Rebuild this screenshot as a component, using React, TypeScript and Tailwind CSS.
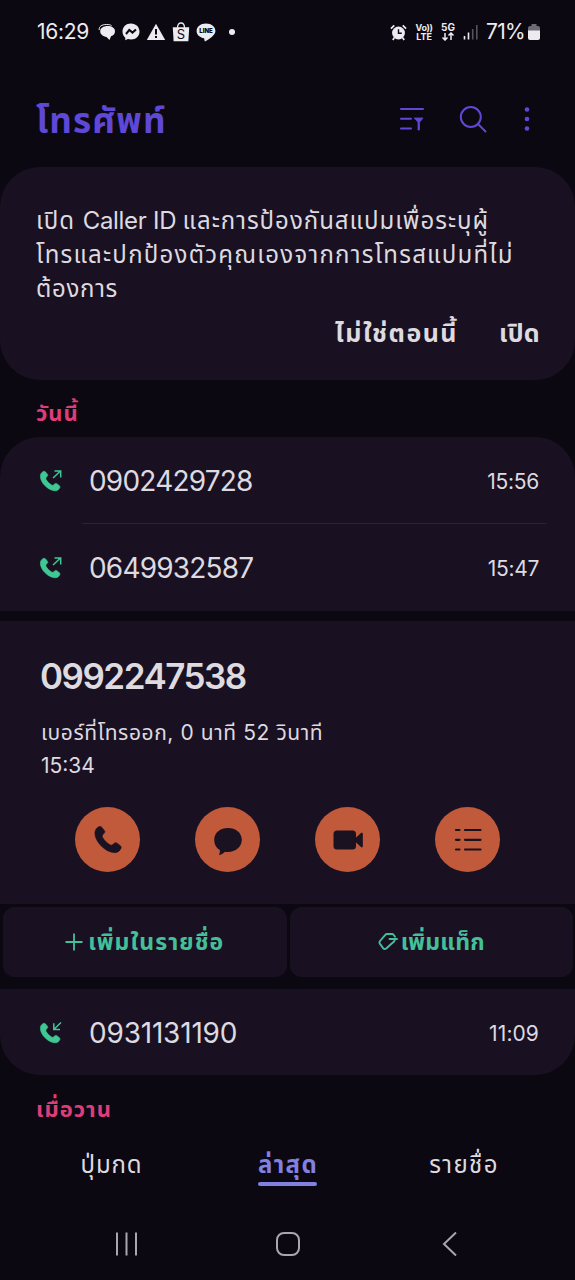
import React from 'react'

type CallKind = 'outgoing' | 'incoming'

const HANDSET =
  'M3.800.6C5 0 6.200.2 7 1.200L9.300 4.100C10 5 10 5.800 9.300 6.600L8 8.100C7.200 9.100 7.100 10 7.700 11.100C9.400 14.100 11.900 16.500 14.800 18.200C15.900 18.800 16.800 18.700 17.700 17.900L19.200 16.700C20 16 20.800 16 21.700 16.600L24.800 18.900C25.900 19.700 26.200 20.900 25.500 22.100C24.100 24.700 21.800 26.100 18.900 25.900C14.500 25.600 9.900 23 6.300 19.300C2.600 15.500.3 11.200.1 7.300C0 4.300 1.300 1.900 3.800.6z'

function CallIcon({ kind }: { kind: CallKind }) {
  return (
    <svg viewBox="0 0 24 24" className="h-6 w-6 shrink-0" fill="none">
      <path d={HANDSET} transform="translate(1.300 2.100) scale(.76)" fill="#3fc794" stroke="#3fc794" strokeWidth=".8" />
      {kind === 'outgoing' ? (
        <path d="M14 9 21.500 2M15.500 2h6.200v6.500" stroke="#3fc794" strokeWidth="1.500" />
      ) : (
        <path d="M22 1.500 15 8.300M14.800 2.300v6.300h6.200" stroke="#3fc794" strokeWidth="1.500" />
      )}
    </svg>
  )
}

function StatusBar() {
  return (
    <div className="flex h-16 items-center justify-between pr-[35px] pl-[37px] text-[#ececf0]">
      <div className="flex items-center">
        <span className="w-[54px] text-[21px] tracking-[-0.3px]">16:29</span>
        <svg viewBox="0 0 18 18" className="ml-[7px] h-[18px] w-[18px]" fill="none">
          <path d="M1.200 7C.8 3.500 3.500 1.500 8.500 1.500c2.500 0 4 .3 5 1" stroke="#ececf0" strokeWidth="1" />
          <path d="M9.500 3C14 3 17 5 17 8.300c0 2.500-1.500 4.200-4 5l-1.500 3.700-3-3C5 13.500 2.200 11.500 2.200 8.300S5.500 3 9.500 3z" fill="#ececf0" />
        </svg>
        <svg viewBox="0 0 18 18" className="ml-[6px] h-[18px] w-[18px]">
          <path d="M9 .5C4 .5.5 4 .5 8.600c0 2.600 1 4.600 2.800 6.100v2.600l2.600-1.200c1 .3 2 .5 3.100.5 5 0 8.500-3.500 8.500-8S14 .5 9 .5z" fill="#ececf0" />
          <path d="m4 11 3.300-4 3.200 2.600L14 6.500" stroke="#0c0811" strokeWidth="2" fill="none" />
        </svg>
        <svg viewBox="0 0 20 18" className="ml-[6px] h-[18px] w-5">
          <path d="M10 .8 19.200 17H.8z" fill="#ececf0" />
          <path d="M10 6v5.500M10 13v2" stroke="#0c0811" strokeWidth="2" />
        </svg>
        <svg viewBox="0 0 18 20" className="ml-[6px] h-5 w-[18px]">
          <path d="M5.500 6C5.500 2.500 7 1 9 1s3.500 1.500 3.500 5" stroke="#ececf0" strokeWidth="1.300" fill="none" />
          <path d="M.8 5.300h16.400l-.8 13.900H1.600z" fill="#ececf0" />
          <text x="9" y="17" textAnchor="middle" fontSize="13" fill="#0c0811" fontFamily="Inter">S</text>
        </svg>
        <svg viewBox="0 0 20 19" className="ml-[6px] h-[19px] w-5">
          <path d="M10 .5C4.500.5.600 3.800.6 8c0 3.700 3 6.500 7.500 7.300L8.800 18.500C12.500 16.500 19.400 12.500 19.400 8 19.400 3.800 15.500.5 10 .5z" fill="#ececf0" />
          <text x="10" y="10.400" textAnchor="middle" fontSize="6" fontWeight="900" fill="#0c0811" fontFamily="Inter">LINE</text>
        </svg>
        <span className="ml-[13px] h-[6px] w-[6px] rounded-full bg-[#ececf0]" />
      </div>

      <div className="flex items-center">
        <svg viewBox="0 0 18 18" className="h-[17px] w-[17px]">
          <circle cx="9" cy="9.500" r="6.800" fill="#ececf0" />
          <path d="M1 5 4.500 1.500M17 5l-3.500-3.500M4.500 14.500 3 17M13.500 14.500 15 17" stroke="#ececf0" strokeWidth="1.800" />
          <path d="M9 5.500v4.300h3.500" stroke="#0c0811" strokeWidth="1.500" fill="none" />
        </svg>
        <div className="ml-2 flex w-[18px] flex-col items-center text-[9px] leading-[9px] font-bold whitespace-nowrap">
          <span className="tracking-[-0.4px]">Vo))</span>
          <span>LTE</span>
        </div>
        <div className="ml-2 flex w-[14px] flex-col items-center">
          <span className="text-[10px] leading-[9px] font-bold">5G</span>
          <svg viewBox="0 0 14 9" className="h-[9px] w-[14px]" fill="none" stroke="#ececf0" strokeWidth="1.500">
            <path d="M4 1v7M1.500 5.500 4 8l2.500-2.500M10 8V1M7.500 3.500 10 1l2.500 2.500" />
          </svg>
        </div>
        <svg viewBox="0 0 16 16" className="ml-2 h-4 w-4">
          <path d="M1.500 12v3.500M5.500 8.500v7" stroke="#ececf0" strokeWidth="1.600" />
          <path d="M9.700 5v10.500M13.800 1v14.500" stroke="#57535d" strokeWidth="1.600" />
        </svg>
        <span className="ml-[7px] w-[39px] text-[21px] tracking-[-0.7px]">71%</span>
        <svg viewBox="0 0 12 18" className="ml-[3px] h-[18px] w-3">
          <path d="M3.500 1h5v2H10a2 2 0 0 1 2 2v4H0V5a2 2 0 0 1 2-2h1.500z" fill="#6d6a72" />
          <path d="M0 7.500h12V15a2 2 0 0 1-2 2H2a2 2 0 0 1-2-2z" fill="#ececf0" />
        </svg>
      </div>
    </div>
  )
}

function Header() {
  return (
    <header className="flex h-[103px] items-center justify-between pr-[45px] pl-[36px] text-[#5f48d6]">
      <h1 className="mt-2 text-[35px] leading-[48px] font-bold tracking-[1.1px]">โทรศัพท์</h1>
      <div className="mt-[6px] flex items-center">
        <svg viewBox="0 0 26 26" className="h-[26px] w-[26px]" fill="none" stroke="currentColor" strokeWidth="2" strokeLinecap="round">
          <path d="M2 3h22M2 12.700h10M2 22.500h10" />
          <path d="M15.500 12h8.500L20.500 16.300V24H19v-7.700z" fill="currentColor" strokeWidth=".8" />
        </svg>
        <svg viewBox="0 0 28 28" className="ml-[34px] h-7 w-7" fill="none" stroke="currentColor" strokeWidth="2" strokeLinecap="round">
          <circle cx="11.800" cy="12" r="10" />
          <path d="m19 19 7.500 7.500" />
        </svg>
        <svg viewBox="0 0 6 26" className="ml-[37px] h-[26px] w-[6px]" fill="currentColor">
          <circle cx="3" cy="3.500" r="2.300" />
          <circle cx="3" cy="13" r="2.300" />
          <circle cx="3" cy="22.500" r="2.300" />
        </svg>
      </div>
    </header>
  )
}

function CallRow({ kind, number, time }: { kind: CallKind; number: string; time: string }) {
  const loose = kind === 'incoming'
  return (
    <div className="flex h-[87px] items-center pr-[36px] pl-[39px]">
      <CallIcon kind={kind} />
      <span className={`ml-[26px] flex-1 text-[28px] ${loose ? 'tracking-[-0.2px]' : 'tracking-[-0.8px]'}`}>{number}</span>
      <span className={`pt-[2px] text-[21px] ${loose ? 'tracking-[0.1px]' : 'tracking-[-0.3px]'}`}>{time}</span>
    </div>
  )
}

function CircleButton({ children }: { children: React.ReactNode }) {
  return (
    <button className="flex h-[65px] w-[65px] items-center justify-center rounded-full bg-[#c05a3a] text-[#1a1121]">
      <svg viewBox="0 0 32 32" className="h-8 w-8" fill="currentColor">
        {children}
      </svg>
    </button>
  )
}

export default function App() {
  return (
    <div className="flex h-[1280px] w-[575px] flex-col overflow-hidden bg-[#0c0811] font-['Inter','Noto_Sans_Thai','Noto_Sans',sans-serif] text-[#dddae0]">
      <StatusBar />
      <Header />

      {/* Caller ID prompt */}
      <section className="h-[213px] rounded-[40px] bg-[#191121] pt-[37px] pr-[35px] pl-[36px]">
        <p className="text-[24px] leading-[34px] whitespace-nowrap">
          <span className="tracking-[0.95px]">เปิด </span>
          <span className="tracking-[-0.3px]">Caller ID </span>
          <span className="tracking-[0.99px]">และการป้องกันสแปมเพื่อระบุผู้</span>
          <br />
          <span className="tracking-[1.24px]">โทรและปกป้องตัวคุณเองจากการโทรสแปมที่ไม่</span>
          <br />
          <span className="tracking-[0.7px]">ต้องการ</span>
        </p>
        <div className="mt-[10px] flex justify-end gap-[41px] text-[25px] leading-[34px] font-bold">
          <button className="tracking-[1.5px]">ไม่ใช่ตอนนี้</button>
          <button className="tracking-[0.3px]">เปิด</button>
        </div>
      </section>

      <h2 className="h-[57px] pl-[36px] text-[22px] leading-[66px] font-bold tracking-[1px] text-[#df3d79]">วันนี้</h2>

      <section className="h-[174px] rounded-t-[40px] bg-[#191121]">
        <CallRow kind="outgoing" number="0902429728" time="15:56" />
        <div className="-mt-px mr-[29px] ml-[82px] h-px bg-[#2b2432]" />
        <CallRow kind="outgoing" number="0649932587" time="15:47" />
      </section>

      {/* Expanded call */}
      <section className="mt-[10px] h-[283px] bg-[#191121] pt-[34px]">
        <h3 className="pl-[40px] text-[35px] leading-[42px] font-semibold tracking-[-1.5px]">0992247538</h3>
        <p className="mt-[19px] pl-[41px] text-[21px] leading-[33px]">
          <span className="tracking-[0.58px]">เบอร์ที่โทรออก, 0 นาที 52 วินาที</span>
          <br />
          15:34
        </p>
        <div className="mt-[25px] flex gap-[55px] pl-[75px]">
          <CircleButton>
            <path d={HANDSET} transform="translate(2.800 2.200) scale(1.020)" stroke="currentColor" strokeWidth=".6" />
          </CircleButton>
          <CircleButton>
            <path d="M16 4C23.500 4 29.800 8.500 29.800 15.800S23.500 28 16 28c-1 0-2 0-2.900-.2-1.600 1.500-3.500 2.700-5.400 3.100-.5.100-.7-.3-.5-.7.700-1.300.900-2.900.6-4.200C4.100 24 2.200 20.300 2.200 15.800 2.200 8.500 8.500 4 16 4z" />
          </CircleButton>
          <CircleButton>
            <rect x="1.500" y="6.500" width="22.500" height="19" rx="3.500" />
            <path d="m23.500 14 5.500-5c.8-.7 1.800-.3 1.800.8v12.500c0 1-1 1.400-1.800.8l-5.500-5z" />
          </CircleButton>
          <CircleButton>
            <path d="M4 6h3.500M13 6h15.500M4 15.800h3.500M13 15.800h15.500M4 25.500h3.500M13 25.500h15.500" stroke="currentColor" strokeWidth="2.200" strokeLinecap="round" />
          </CircleButton>
        </div>
      </section>

      <div className="flex h-[85px] gap-[3px] pt-[3px] pr-[2px] pl-[3px] text-[23px] font-bold text-[#43c09a]">
        <button className="flex h-[70px] flex-1 items-center justify-center gap-[5px] rounded-[12px] bg-[#191121]">
          <svg viewBox="0 0 18 18" className="h-[18px] w-[18px]" stroke="currentColor" strokeWidth="1.800">
            <path d="M9 .5v17M.5 9h17" />
          </svg>
          <span className="pt-px tracking-[1.1px]">เพิ่มในรายชื่อ</span>
        </button>
        <button className="flex h-[70px] flex-1 items-center justify-center gap-[3px] rounded-[12px] bg-[#191121]">
          <svg viewBox="0 0 20 20" className="h-5 w-5" fill="none" stroke="currentColor" strokeWidth="1.900" strokeLinejoin="round" strokeLinecap="round">
            <path d="M17 4.800 15.500 2.800q-.6-.8-1.500-.8H9q-1 0-1.700.8L2 9q-1 1.300-.2 2.600l3.300 4.500q1.300 1.600 3.100.4L16 9.500q.7-.8.800-2V7.200M11.500 7h7.500" />
          </svg>
          <span className="pt-px tracking-[0.2px]">เพิ่มแท็ก</span>
        </button>
      </div>

      <section className="h-[86px] rounded-b-[40px] bg-[#191121]">
        <CallRow kind="incoming" number="0931131190" time="11:09" />
      </section>

      <h2 className="h-[57px] pl-[36px] text-[22px] leading-[68px] font-bold tracking-[1px] text-[#df3d79]">เมื่อวาน</h2>

      <nav className="flex h-[76px] pt-[16px] text-[24px] leading-[34px]">
        <div className="flex w-[222px] justify-center pl-px tracking-[0.9px]">ปุ่มกด</div>
        <div className="flex w-[131px] flex-col items-center font-bold text-[#8280e0]">
          <span className="pl-px tracking-[1.4px]">ล่าสุด</span>
          <span className="h-1 w-[59px] rounded-full bg-[#8280e0]" />
        </div>
        <div className="flex w-[222px] justify-center tracking-[1.4px]">รายชื่อ</div>
      </nav>

      {/* System navigation */}
      <div className="flex h-[72px] items-center justify-between pr-[114px] pl-[114px]">
        <svg viewBox="0 0 24 24" className="h-6 w-6" stroke="#a9a6ae" strokeWidth="2">
          <path d="M3 .5v23M12.500.5v23M22 .5v23" />
        </svg>
        <span className="h-6 w-6 rounded-[8px] border-2 border-[#a9a6ae]" />
        <svg viewBox="0 0 24 24" className="h-6 w-6" fill="none" stroke="#a9a6ae" strokeWidth="2">
          <path d="M19 .5 7 12l12 11.500" />
        </svg>
      </div>
    </div>
  )
}
